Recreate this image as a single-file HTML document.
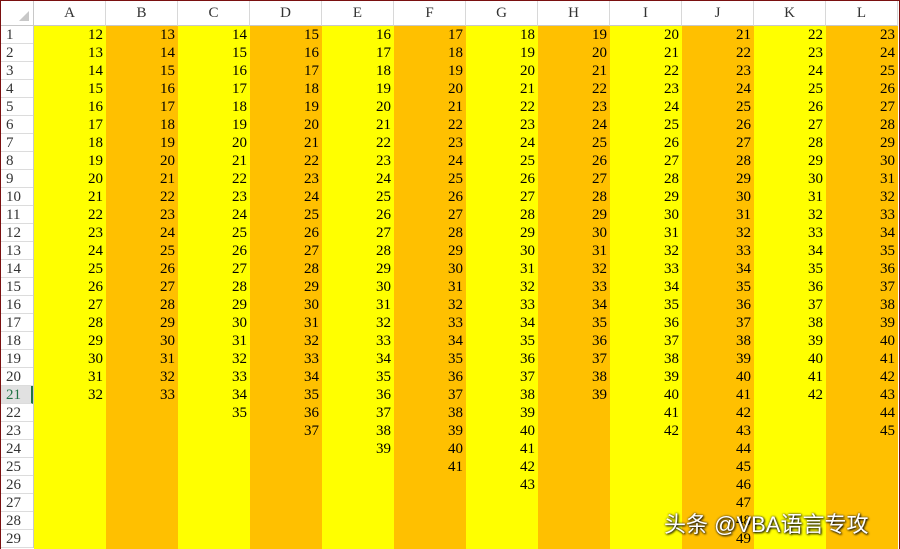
<!DOCTYPE html>
<html><head><meta charset="utf-8"><style>
*{margin:0;padding:0;box-sizing:border-box}
body{width:900px;height:549px;overflow:hidden;background:#fff;position:relative;font-family:"Liberation Serif","Noto Serif CJK SC",serif;font-size:15px;color:#000}
.frame{position:absolute;left:0;top:0;width:900px;height:549px;border:1px solid #7a1010;border-bottom:none;z-index:5;pointer-events:none}
.hdr{position:absolute;top:1px;height:25px;border-right:1px solid #d8d8d8;border-bottom:1px solid #c8c8c8;text-align:center;line-height:25px;font-size:15px;color:#333}
.col{position:absolute;top:26px;width:72px;height:523px;text-align:right;padding-right:3px;line-height:18px}
.y{background:#ffff00}.o{background:#ffc000}
.rh{position:absolute;left:1px;top:26px;width:33px;border-right:1px solid #c8c8c8}
.rh div{height:18px;line-height:18px;border-bottom:1px solid #dcdcdc;padding-left:5px;font-size:15px;color:#333}
.rh .sel{background:#e1e1e1;color:#217346;border-right:2px solid #217346}
.corner{position:absolute;left:1px;top:1px;width:33px;height:25px;border-right:1px solid #c8c8c8;border-bottom:1px solid #c8c8c8}
.corner:after{content:"";position:absolute;right:4px;bottom:4px;border-left:10px solid transparent;border-bottom:10px solid #c8c8c8}
.wm{position:absolute;left:664px;top:507px;font-family:"Liberation Sans","Noto Sans CJK SC",sans-serif;font-size:22px;color:#fff;text-shadow:1px 1px 2px #000,0 0 2px #333;z-index:6;white-space:nowrap}
</style></head><body>
<div class="corner"></div>
<div class="hdr" style="left:34px;width:72px">A</div><div class="hdr" style="left:106px;width:72px">B</div><div class="hdr" style="left:178px;width:72px">C</div><div class="hdr" style="left:250px;width:72px">D</div><div class="hdr" style="left:322px;width:72px">E</div><div class="hdr" style="left:394px;width:72px">F</div><div class="hdr" style="left:466px;width:72px">G</div><div class="hdr" style="left:538px;width:72px">H</div><div class="hdr" style="left:610px;width:72px">I</div><div class="hdr" style="left:682px;width:72px">J</div><div class="hdr" style="left:754px;width:72px">K</div><div class="hdr" style="left:826px;width:72px">L</div>
<div class="rh"><div>1</div><div>2</div><div>3</div><div>4</div><div>5</div><div>6</div><div>7</div><div>8</div><div>9</div><div>10</div><div>11</div><div>12</div><div>13</div><div>14</div><div>15</div><div>16</div><div>17</div><div>18</div><div>19</div><div>20</div><div class="sel">21</div><div>22</div><div>23</div><div>24</div><div>25</div><div>26</div><div>27</div><div>28</div><div>29</div></div>
<div class="col y" style="left:34px">12<br>13<br>14<br>15<br>16<br>17<br>18<br>19<br>20<br>21<br>22<br>23<br>24<br>25<br>26<br>27<br>28<br>29<br>30<br>31<br>32</div>
<div class="col o" style="left:106px">13<br>14<br>15<br>16<br>17<br>18<br>19<br>20<br>21<br>22<br>23<br>24<br>25<br>26<br>27<br>28<br>29<br>30<br>31<br>32<br>33</div>
<div class="col y" style="left:178px">14<br>15<br>16<br>17<br>18<br>19<br>20<br>21<br>22<br>23<br>24<br>25<br>26<br>27<br>28<br>29<br>30<br>31<br>32<br>33<br>34<br>35</div>
<div class="col o" style="left:250px">15<br>16<br>17<br>18<br>19<br>20<br>21<br>22<br>23<br>24<br>25<br>26<br>27<br>28<br>29<br>30<br>31<br>32<br>33<br>34<br>35<br>36<br>37</div>
<div class="col y" style="left:322px">16<br>17<br>18<br>19<br>20<br>21<br>22<br>23<br>24<br>25<br>26<br>27<br>28<br>29<br>30<br>31<br>32<br>33<br>34<br>35<br>36<br>37<br>38<br>39</div>
<div class="col o" style="left:394px">17<br>18<br>19<br>20<br>21<br>22<br>23<br>24<br>25<br>26<br>27<br>28<br>29<br>30<br>31<br>32<br>33<br>34<br>35<br>36<br>37<br>38<br>39<br>40<br>41</div>
<div class="col y" style="left:466px">18<br>19<br>20<br>21<br>22<br>23<br>24<br>25<br>26<br>27<br>28<br>29<br>30<br>31<br>32<br>33<br>34<br>35<br>36<br>37<br>38<br>39<br>40<br>41<br>42<br>43</div>
<div class="col o" style="left:538px">19<br>20<br>21<br>22<br>23<br>24<br>25<br>26<br>27<br>28<br>29<br>30<br>31<br>32<br>33<br>34<br>35<br>36<br>37<br>38<br>39</div>
<div class="col y" style="left:610px">20<br>21<br>22<br>23<br>24<br>25<br>26<br>27<br>28<br>29<br>30<br>31<br>32<br>33<br>34<br>35<br>36<br>37<br>38<br>39<br>40<br>41<br>42</div>
<div class="col o" style="left:682px">21<br>22<br>23<br>24<br>25<br>26<br>27<br>28<br>29<br>30<br>31<br>32<br>33<br>34<br>35<br>36<br>37<br>38<br>39<br>40<br>41<br>42<br>43<br>44<br>45<br>46<br>47<br>48<br>49</div>
<div class="col y" style="left:754px">22<br>23<br>24<br>25<br>26<br>27<br>28<br>29<br>30<br>31<br>32<br>33<br>34<br>35<br>36<br>37<br>38<br>39<br>40<br>41<br>42</div>
<div class="col o" style="left:826px">23<br>24<br>25<br>26<br>27<br>28<br>29<br>30<br>31<br>32<br>33<br>34<br>35<br>36<br>37<br>38<br>39<br>40<br>41<br>42<br>43<br>44<br>45</div>
<div class="wm">头条 @VBA语言专攻</div>
<div class="frame"></div>
</body></html>
